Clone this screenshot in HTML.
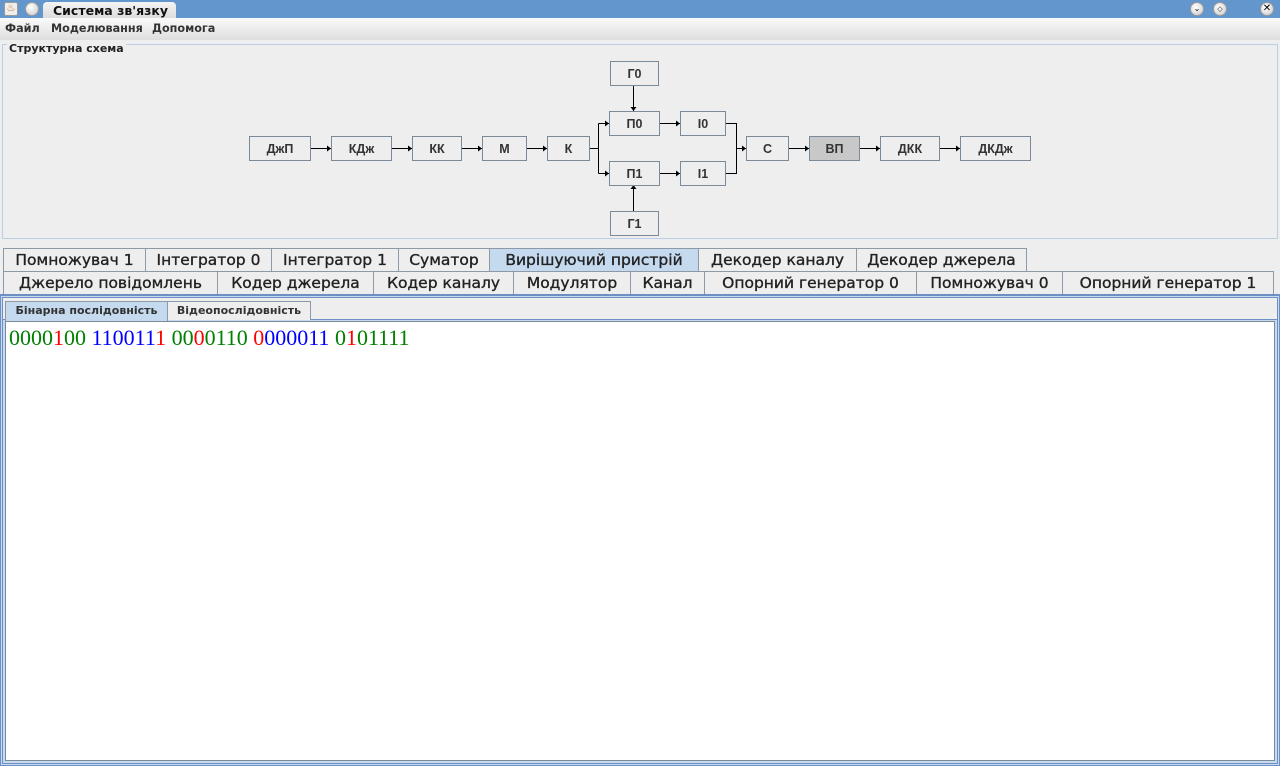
<!DOCTYPE html>
<html><head><meta charset="utf-8"><style>
*{margin:0;padding:0;box-sizing:border-box}
body{width:1280px;height:766px;background:#eeeeee;position:relative;overflow:hidden;font-family:"DejaVu Sans","Liberation Sans",sans-serif}
.abs{position:absolute}
#title{left:0;top:0;width:1280px;height:18px;background:#6296cd}
#ttab{left:43px;top:2px;width:133px;height:17px;background:linear-gradient(#f4f4f4,#dcdcdc);border-radius:4px 4px 0 0;font-size:12.5px;color:#111;padding:1px 0 0 10px;font-weight:bold}
.circ{width:14px;height:14px;border-radius:50%;background:radial-gradient(circle at 40% 35%,#fff,#c8c8c8);border:1px solid #9a9a9a}
#menu{left:0;top:18px;width:1280px;height:22px;background:linear-gradient(#fafafa,#dedede);font-size:11.2px;font-weight:bold;color:#333}
#menu span{position:absolute;top:4px}
#grp{left:2px;top:44px;width:1276px;height:195px;border:1px solid #b8cfe5}
#grpt{left:7px;top:42px;font-size:11px;font-weight:bold;background:#eeeeee;padding:0 2px;color:#222}
.b{position:absolute;height:25px;border:1px solid #7a8a99;background:#eeeeee;font:bold 12.5px "Liberation Sans",sans-serif;color:#333;text-align:center;line-height:24px}
.tab{position:absolute;height:23px;border:1px solid #8c99a6;border-bottom:none;background:#eeeeee;font-size:15.5px;color:#222;text-align:center;line-height:22px;white-space:nowrap;-webkit-text-stroke:0.35px #222}
.st{position:absolute;height:19px;border:1px solid #8c99a6;border-bottom:none;font-size:11px;font-weight:bold;color:#333;text-align:center;line-height:18px;background:#eeeeee}
.sel{background:#c5d9ef}
#txt{font:22px "Liberation Serif",serif;left:9px;top:325px;white-space:pre}
.g{color:#008000}.r{color:#ff0000}.u{color:#0000ff}
</style></head><body>
<div id="title" class="abs"></div>
<div class="abs" style="left:4px;top:2px;width:14px;height:14px;background:#eee;border:1px solid #999;border-radius:2px;color:#c60;font-size:10px;text-align:center;line-height:12px">♨</div>
<div class="abs circ" style="left:25px;top:2px"></div>
<div id="ttab" class="abs">Система зв'язку</div>
<div class="abs circ" style="left:1190px;top:2px;font-size:8px;text-align:center;line-height:12px">⌄</div>
<div class="abs circ" style="left:1213px;top:2px;font-size:7px;text-align:center;line-height:12px">◇</div>
<div class="abs circ" style="left:1260px;top:2px;font-size:10px;text-align:center;line-height:12px">✕</div>
<div id="menu" class="abs"><span style="left:5px">Файл</span><span style="left:51px">Моделювання</span><span style="left:152px">Допомога</span></div>
<div id="grp" class="abs"></div>
<div id="grpt" class="abs">Структурна схема</div>
<svg class="abs" style="left:0;top:0" width="1280" height="240">
<g stroke="#000" fill="none" stroke-width="1">
<path d="M310 148.5H331M391 148.5H412M461 148.5H482M526 148.5H547M589 148.5H598.5M598.5 123.5V173.5M598.5 123.5H609M598.5 173.5H609M659 123.5H680M659 173.5H680M725 123.5H736.5V173.5H725M736.5 148.5H746M788 148.5H809M859 148.5H880M939 148.5H960M633.5 85V111M633.5 185V211"/>
</g>
<g fill="#000">
<path d="M331 148.5l-4-3v6zM412 148.5l-4-3v6zM482 148.5l-4-3v6zM547 148.5l-4-3v6zM609 123.5l-4-3v6zM609 173.5l-4-3v6zM680 123.5l-4-3v6zM680 173.5l-4-3v6zM746 148.5l-4-3v6zM809 148.5l-4-3v6zM880 148.5l-4-3v6zM960 148.5l-4-3v6zM633.5 111l-3-4h6zM633.5 185l-3 4h6z"/>
</g></svg>
<div class="b" style="left:249px;top:136px;width:62px">ДжП</div>
<div class="b" style="left:331px;top:136px;width:61px">КДж</div>
<div class="b" style="left:412px;top:136px;width:50px">КК</div>
<div class="b" style="left:482px;top:136px;width:45px">М</div>
<div class="b" style="left:547px;top:136px;width:43px">К</div>
<div class="b" style="left:610px;top:61px;width:49px">Г0</div>
<div class="b" style="left:609px;top:111px;width:51px">П0</div>
<div class="b" style="left:609px;top:161px;width:51px">П1</div>
<div class="b" style="left:610px;top:211px;width:49px">Г1</div>
<div class="b" style="left:680px;top:111px;width:46px">І0</div>
<div class="b" style="left:680px;top:161px;width:46px">І1</div>
<div class="b" style="left:746px;top:136px;width:43px">С</div>
<div class="b" style="left:809px;top:136px;width:51px;background:#c8c8c8">ВП</div>
<div class="b" style="left:880px;top:136px;width:60px">ДКК</div>
<div class="b" style="left:960px;top:136px;width:71px">ДКДж</div>

<div class="tab" style="left:3px;top:248px;width:143px">Помножувач 1</div>
<div class="tab" style="left:145px;top:248px;width:127px">Інтегратор 0</div>
<div class="tab" style="left:271px;top:248px;width:128px">Інтегратор 1</div>
<div class="tab" style="left:398px;top:248px;width:92px">Суматор</div>
<div class="tab sel" style="left:489px;top:248px;width:210px">Вирішуючий пристрій</div>
<div class="tab" style="left:698px;top:248px;width:159px">Декодер каналу</div>
<div class="tab" style="left:856px;top:248px;width:171px">Декодер джерела</div>
<div class="tab" style="left:3px;top:271px;width:215px">Джерело повідомлень</div>
<div class="tab" style="left:217px;top:271px;width:157px">Кодер джерела</div>
<div class="tab" style="left:373px;top:271px;width:141px">Кодер каналу</div>
<div class="tab" style="left:513px;top:271px;width:118px">Модулятор</div>
<div class="tab" style="left:630px;top:271px;width:75px">Канал</div>
<div class="tab" style="left:704px;top:271px;width:213px">Опорний генератор 0</div>
<div class="tab" style="left:916px;top:271px;width:147px">Помножувач 0</div>
<div class="tab" style="left:1062px;top:271px;width:212px">Опорний генератор 1</div>

<div class="abs" style="left:0;top:294px;width:1280px;height:472px;border:1px solid #6d8fc6;border-top:2px solid #6d8fc6;background:#c5d9ef"></div>
<div class="abs" style="left:2px;top:297px;width:1276px;height:467px;border:1px solid #6d8fc6;background:#eeeeee"></div>
<div class="abs" style="left:3px;top:319px;width:1274px;height:444px;background:#c5d9ef;border-top:1px solid #6d8fc6"></div>
<div class="st sel" style="left:5px;top:301px;width:163px;height:20px">Бінарна послідовність</div>
<div class="st" style="left:167px;top:301px;width:144px">Відеопослідовність</div>
<div class="abs" style="left:5px;top:321px;width:1270px;height:440px;background:#fff;border:1px solid #7a8a99"></div>
<div id="txt" class="abs"><span class="g">0000</span><span class="r">1</span><span class="g">00</span> <span class="u">110011</span><span class="r">1</span> <span class="g">00</span><span class="r">0</span><span class="g">0110</span> <span class="r">0</span><span class="u">000011</span> <span class="g">0</span><span class="r">1</span><span class="g">01111</span></div>
</body></html>
